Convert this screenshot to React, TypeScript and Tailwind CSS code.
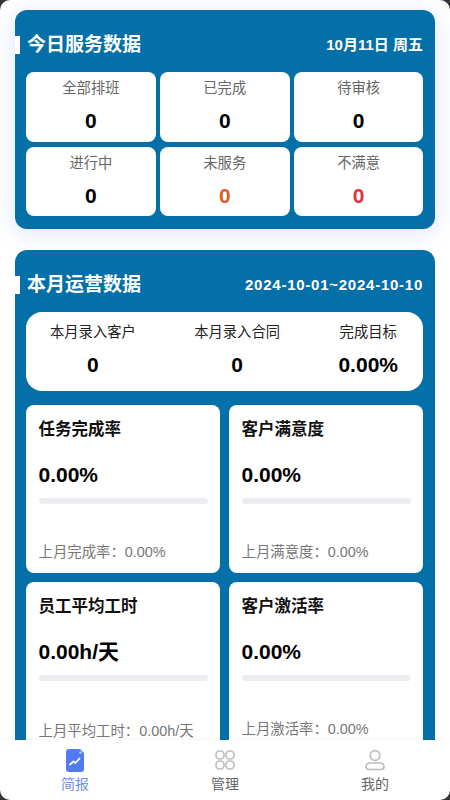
const font = "font-['Liberation_Sans','Noto_Sans_CJK_SC',sans-serif]";

function StatCell({ label, value, color = 'text-black' }: { label: string; value: string; color?: string }) {
  return (
    <div className="h-[69.5px] bg-white rounded-lg flex flex-col items-center pt-[6px]">
      <div className="text-[14.3px] leading-[20px] text-[#666]">{label}</div>
      <div className={`mt-[11px] text-[21px] leading-[24px] font-bold ${color}`}>{value}</div>
    </div>
  );
}

function SectionHead({ title, right, rightClass }: { title: string; right: string; rightClass: string }) {
  return (
    <div className="flex items-center justify-between h-[20px] pr-[12px]">
      <div className="flex items-center">
        <div className="w-[5px] h-[18px] bg-white" />
        <div className="ml-[7px] text-[19px] leading-[24px] font-bold text-white">{title}</div>
      </div>
      <div className={`font-bold text-white ${rightClass}`}>{right}</div>
    </div>
  );
}

function RateCard({ title, value, last, lastMb = 'mb-[11px]' }: { title: string; value: string; last: string; lastMb?: string }) {
  return (
    <div className="h-[168px] bg-white rounded-lg px-[12.5px] pt-[14px] flex flex-col">
      <div className="text-[16.5px] leading-[20px] font-bold text-[#111]">{title}</div>
      <div className="mt-[23px] text-[21px] leading-[26px] font-bold text-black">{value}</div>
      <div className="mt-[10px] h-[6px] rounded-full bg-[#ecedf1]" />
      <div className={`mt-auto ${lastMb} text-[14.4px] leading-[20px] text-[#777] whitespace-nowrap`}>{last}</div>
    </div>
  );
}

function TopStat({ label, value }: { label: string; value: string }) {
  return (
    <div className="flex flex-col items-center">
      <div className="text-[14.3px] leading-[20px] text-[#222]">{label}</div>
      <div className="mt-[10px] leading-[26px] font-bold text-black text-[21px]">{value}</div>
    </div>
  );
}

function TabItem({ label, active, children }: { label: string; active?: boolean; children: React.ReactNode }) {
  return (
    <div className="flex-1 flex flex-col items-center">
      <div className="w-[22px] h-[23px] flex justify-center">{children}</div>
      <div className={`mt-[2px] text-[14px] leading-[20px] ${active ? 'text-[#6f8fe0]' : 'text-[#666]'}`}>{label}</div>
    </div>
  );
}

export default function App() {
  return (
    <div className={`relative w-[450px] h-[800px] overflow-hidden bg-white ${font}`}>
      <div className="px-[15px] pt-[10px]">
        {/* today */}
        <div className="h-[218.5px] rounded-xl bg-[#0570a8] pt-[25px] shadow-[0_4px_24px_rgba(90,120,255,0.2)]">
          <SectionHead title="今日服务数据" right="10月11日 周五" rightClass="text-[15px] leading-[20px]" />
          <div className="mt-[17px] ml-[11px] mr-[11.5px] grid grid-cols-3 gap-x-[4px] gap-y-[5px]">
            <StatCell label="全部排班" value="0" />
            <StatCell label="已完成" value="0" />
            <StatCell label="待审核" value="0" />
            <StatCell label="进行中" value="0" />
            <StatCell label="未服务" value="0" color="text-[#d9601f]" />
            <StatCell label="不满意" value="0" color="text-[#e5323e]" />
          </div>
        </div>

        {/* month */}
        <div className="mt-[21px] rounded-t-xl bg-[#0570a8] h-[560px] pt-[25px]">
          <SectionHead title="本月运营数据" right="2024-10-01~2024-10-10" rightClass="text-[15px] leading-[20px] tracking-[0.75px]" />
          <div className="mt-[17px] ml-[11px] mr-[12px] h-[79px] bg-white rounded-2xl flex justify-between pt-[10px] pl-[24px] pr-[25px]">
            <TopStat label="本月录入客户" value="0" />
            <TopStat label="本月录入合同" value="0" />
            <TopStat label="完成目标" value="0.00%" />
          </div>
          <div className="mt-[14px] ml-[11px] mr-[12px] grid grid-cols-2 gap-x-[9px] gap-y-[9px]">
            <RateCard title="任务完成率" value="0.00%" last="上月完成率：0.00%" />
            <RateCard title="客户满意度" value="0.00%" last="上月满意度：0.00%" />
            <RateCard title="员工平均工时" value="0.00h/天" last="上月平均工时：0.00h/天" lastMb="mb-[9px]" />
            <RateCard title="客户激活率" value="0.00%" last="上月激活率：0.00%" />
          </div>
        </div>
      </div>

      {/* tab bar */}
      <div className="absolute left-0 right-0 bottom-0 h-[60px] bg-white flex pt-[9px] shadow-[0_-1px_3px_rgba(0,0,0,0.04)]">
        <TabItem label="简报" active>
          <svg viewBox="0 0 18 23" className="w-[18px] h-[23px]">
            <path d="M3 0h11l4 4v16a3 3 0 0 1-3 3H3a3 3 0 0 1-3-3V3a3 3 0 0 1 3-3z" fill="#4f7cf0" />
            <circle cx="14.500" cy="3.500" r="1.300" fill="#b9ccfa" />
            <path d="M4 15.500l3.500-3 2 1.500 4-4.500" fill="none" stroke="#fff" strokeWidth="1.700" strokeLinecap="round" strokeLinejoin="round" />
          </svg>
        </TabItem>
        <TabItem label="管理">
          <svg viewBox="0 0 22 22" className="w-[22px] h-[22px]" fill="none" stroke="#bdbdbd" strokeWidth="1.700">
            <rect x="2" y="2" width="8" height="8" rx="3.500" />
            <rect x="12" y="2" width="8" height="8" rx="3.500" />
            <rect x="2" y="12" width="8" height="8" rx="3.500" />
            <rect x="12" y="12" width="8" height="8" rx="3.500" />
          </svg>
        </TabItem>
        <TabItem label="我的">
          <svg viewBox="0 0 22 22" className="w-[22px] h-[22px]" fill="none" stroke="#bdbdbd" strokeWidth="1.700">
            <circle cx="11" cy="6.500" r="4.800" />
            <path d="M6 14h10a4 4 0 0 1 4 3.500a3 3 0 0 1-3 3H5a3 3 0 0 1-3-3a4 4 0 0 1 4-3.500z" />
          </svg>
        </TabItem>
      </div>

      {/* screen corners */}
      <svg className="absolute left-0 top-0 w-[14px] h-[14px]" viewBox="0 0 14 14"><path d="M0 0h10A10 10 0 0 0 0 10z" fill="#333" /></svg>
      <svg className="absolute right-0 top-0 w-[14px] h-[14px]" viewBox="0 0 14 14"><path d="M14 0H4A10 10 0 0 1 14 10z" fill="#333" /></svg>
      <svg className="absolute left-0 bottom-0 w-[14px] h-[14px]" viewBox="0 0 14 14"><path d="M0 14h10A10 10 0 0 1 0 4z" fill="#333" /></svg>
      <svg className="absolute right-0 bottom-0 w-[14px] h-[14px]" viewBox="0 0 14 14"><path d="M14 14H4A10 10 0 0 0 14 4z" fill="#333" /></svg>
    </div>
  );
}
